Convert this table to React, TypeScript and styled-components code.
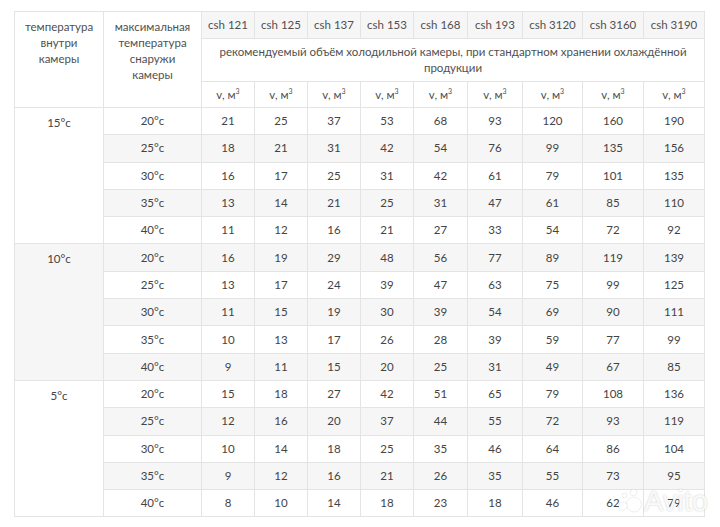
import React from "react";
import styled, { createGlobalStyle } from "styled-components";

const GlobalStyle = createGlobalStyle`
  html, body {
    margin: 0;
    padding: 0;
    background: #fff;
  }
  body {
    font-family: "Lato", "Open Sans", sans-serif;
    color: #444;
  }
`;

const models = ["csh 121", "csh 125", "csh 137", "csh 153", "csh 168", "csh 193", "csh 3120", "csh 3160", "csh 3190"];
const widths = [89, 98, 53, 53, 53, 53, 54, 55, 60, 61, 61];

type Group = { inside: string; rows: { outside: string; values: number[] }[] };

const data: Group[] = [
  {
    inside: "15°c",
    rows: [
      { outside: "20°c", values: [21, 25, 37, 53, 68, 93, 120, 160, 190] },
      { outside: "25°c", values: [18, 21, 31, 42, 54, 76, 99, 135, 156] },
      { outside: "30°c", values: [16, 17, 25, 31, 42, 61, 79, 101, 135] },
      { outside: "35°c", values: [13, 14, 21, 25, 31, 47, 61, 85, 110] },
      { outside: "40°c", values: [11, 12, 16, 21, 27, 33, 54, 72, 92] },
    ],
  },
  {
    inside: "10°c",
    rows: [
      { outside: "20°c", values: [16, 19, 29, 48, 56, 77, 89, 119, 139] },
      { outside: "25°c", values: [13, 17, 24, 39, 47, 63, 75, 99, 125] },
      { outside: "30°c", values: [11, 15, 19, 30, 39, 54, 69, 90, 111] },
      { outside: "35°c", values: [10, 13, 17, 26, 28, 39, 59, 77, 99] },
      { outside: "40°c", values: [9, 11, 15, 20, 25, 31, 49, 67, 85] },
    ],
  },
  {
    inside: "5°c",
    rows: [
      { outside: "20°c", values: [15, 18, 27, 42, 51, 65, 79, 108, 136] },
      { outside: "25°c", values: [12, 16, 20, 37, 44, 55, 72, 93, 119] },
      { outside: "30°c", values: [10, 14, 18, 25, 35, 46, 64, 86, 104] },
      { outside: "35°c", values: [9, 12, 16, 21, 26, 35, 55, 73, 95] },
      { outside: "40°c", values: [8, 10, 14, 18, 23, 18, 46, 62, 79] },
    ],
  },
];

const Page = styled.div`
  position: relative;
  padding: 11px 0 0 14px;
  width: 720px;
  height: 527px;
  box-sizing: border-box;
  overflow: hidden;
`;

const Table = styled.table`
  width: 690px;
  table-layout: fixed;
  border-collapse: collapse;
  font-size: 11.5px;
  line-height: 16px;
  text-align: center;
`;

const HeadRow = styled.tr<{ $h: number }>`
  height: ${(p) => p.$h}px;
`;

const Th = styled.th<{ $grey?: boolean; $top?: boolean }>`
  border: 1px solid #e4e4e4;
  font-weight: 400;
  color: #505050;
  padding: ${(p) => (p.$top ? "7px 8px 0" : "0 6px")};
  vertical-align: ${(p) => (p.$top ? "top" : "middle")};
  background: ${(p) => (p.$grey ? "#f6f6f6" : "#fff")};
`;

const Sup = styled.sup`
  font-size: 7px;
  line-height: 0;
  vertical-align: 5px;
`;

const BodyRow = styled.tr`
  height: 27.3px;
  &:nth-child(even) {
    background: #f6f6f6;
  }
`;

const Td = styled.td<{ $top?: boolean }>`
  border: 1px solid #e4e4e4;
  padding: ${(p) => (p.$top ? "7px 0 0" : "0")};
  vertical-align: ${(p) => (p.$top ? "top" : "middle")};
  color: #444;
`;

const Watermark = styled.div`
  position: absolute;
  left: 617px;
  top: 486px;
  display: flex;
  align-items: center;
  gap: 1px;
  pointer-events: none;
`;

const MarkText = styled.span`
  font-family: "Liberation Sans", Arial, sans-serif;
  font-size: 29px;
  line-height: 30px;
  font-weight: 400;
  color: rgba(255, 255, 255, 0.88);
  text-shadow: 0 0 2px rgba(0, 0, 0, 0.22);
`;

const AvitoLogo = () => (
  <svg width="26" height="26" viewBox="0 0 26 26">
    <g fill="rgba(255,255,255,0.92)" stroke="rgba(0,0,0,0.12)" strokeWidth="0.6">
      <circle cx="17" cy="16.5" r="7.5" />
      <circle cx="6" cy="18" r="4.2" />
      <circle cx="16.5" cy="4.5" r="3.3" />
      <circle cx="7.5" cy="7.5" r="2.4" />
    </g>
  </svg>
);

const Vol = () => (
  <>
    v, м<Sup>3</Sup>
  </>
);

export default function App() {
  return (
    <>
      <GlobalStyle />
      <Page>
        <Table>
          <colgroup>
            {widths.map((w, i) => (
              <col key={i} style={{ width: w }} />
            ))}
          </colgroup>
          <thead>
            <HeadRow $h={27}>
              <Th rowSpan={3} $top>
                температура внутри камеры
              </Th>
              <Th rowSpan={3} $top>
                максимальная температура снаружи камеры
              </Th>
              {models.map((m) => (
                <Th key={m} $grey>
                  {m}
                </Th>
              ))}
            </HeadRow>
            <HeadRow $h={43}>
              <Th colSpan={9}>
                рекомендуемый объём холодильной камеры, при стандартном хранении охлаждённой продукции
              </Th>
            </HeadRow>
            <HeadRow $h={26}>
              {models.map((m) => (
                <Th key={m}>
                  <Vol />
                </Th>
              ))}
            </HeadRow>
          </thead>
          <tbody>
            {data.map((g) =>
              g.rows.map((r, i) => (
                <BodyRow key={g.inside + r.outside}>
                  {i === 0 && (
                    <Td rowSpan={g.rows.length} $top>
                      {g.inside}
                    </Td>
                  )}
                  <Td>{r.outside}</Td>
                  {r.values.map((v, j) => (
                    <Td key={j}>{v}</Td>
                  ))}
                </BodyRow>
              ))
            )}
          </tbody>
        </Table>
        <Watermark>
          <AvitoLogo />
          <MarkText>Avito</MarkText>
        </Watermark>
      </Page>
    </>
  );
}
